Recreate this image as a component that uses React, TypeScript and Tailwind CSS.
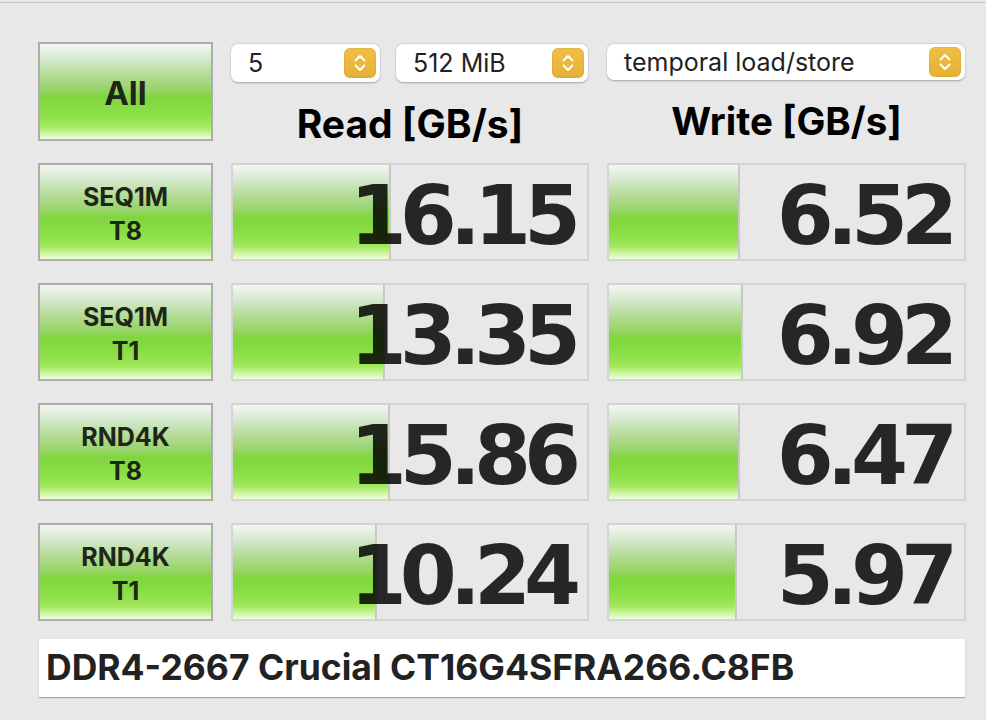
import React from "react";

const green =
  "bg-[linear-gradient(to_bottom,#f3f6f1_0%,#d6ead0_15%,#b0d98f_35%,#98d46a_48%,#80d63e_56%,#8ade46_72%,#a0e85a_86%,#d8f8b4_96%,#ecffd8_100%)]";

function Stepper() {
  return (
    <div className="w-[32px] h-[30px] rounded-[6px] bg-[linear-gradient(to_bottom,#efbf45,#e6b034)] flex items-center justify-center shadow-[inset_0_0_0_0.5px_rgba(0,0,0,0.08)]">
      <svg width="14" height="20" viewBox="0 0 14 20" fill="none">
        <path d="M2.5 7.5 L7 3 L11.5 7.5" stroke="white" strokeWidth="2" strokeLinecap="round" strokeLinejoin="round" />
        <path d="M2.5 12.5 L7 17 L11.5 12.5" stroke="white" strokeWidth="2" strokeLinecap="round" strokeLinejoin="round" />
      </svg>
    </div>
  );
}

function Select({ label, className }: { label: string; className: string }) {
  return (
    <div
      className={`h-[38px] bg-white rounded-[7px] shadow-[0_0.5px_2px_rgba(0,0,0,0.3)] flex items-center justify-between pl-[17px] pr-[4px] ${className}`}
    >
      <span className="text-[25px] text-[#222] font-['Inter',sans-serif] leading-none">{label}</span>
      <Stepper />
    </div>
  );
}

function LabelButton({ l1, l2 }: { l1: string; l2: string }) {
  return (
    <div
      className={`h-[98px] border-2 border-[#adadad] ${green} flex flex-col items-center justify-center pt-[3px]`}
    >
      <span className="text-[25px] font-bold leading-[34px] text-[#1d2618] font-['Inter',sans-serif]">{l1}</span>
      <span className="text-[25px] font-bold leading-[34px] text-[#1d2618] font-['Inter',sans-serif]">{l2}</span>
    </div>
  );
}

function ValueCell({ value, bar }: { value: string; bar: number }) {
  return (
    <div className="relative h-[98px] border-2 border-[#d3d3d3] bg-[#e8e8e8] flex justify-end items-start pt-[10px] pr-[13px]">
      <div
        className={`absolute left-0 top-0 bottom-0 ${green} border-r-2 border-[#c8c8c8]`}
        style={{ width: bar }}
      />
      <span className="relative text-[82px] leading-[82px] font-bold text-[rgba(0,0,0,0.84)] tracking-[-7px] font-['DejaVu_Sans',sans-serif]">
        {value}
      </span>
    </div>
  );
}

const rows = [
  { l1: "SEQ1M", l2: "T8", r: "16.15", rb: 158, w: "6.52", wb: 131 },
  { l1: "SEQ1M", l2: "T1", r: "13.35", rb: 152, w: "6.92", wb: 134 },
  { l1: "RND4K", l2: "T8", r: "15.86", rb: 157, w: "6.47", wb: 131 },
  { l1: "RND4K", l2: "T1", r: "10.24", rb: 144, w: "5.97", wb: 128 },
];

export default function App() {
  return (
    <div className="w-[986px] h-[720px] bg-[#e8e8e8] pt-[2px] overflow-hidden">
      <div className="h-px bg-[#c8c8c8]" />
      <div className="pl-[38px] pt-[39px]">
        <div className="grid grid-cols-[175px_358px_359px] gap-x-[18px] gap-y-[22px]">
          <div
            className={`h-[99px] border-2 border-[#adadad] ${green} flex items-center justify-center pt-[4px]`}
          >
            <span className="text-[33px] font-bold text-[#1d2618] font-['Inter',sans-serif] leading-none">All</span>
          </div>
          <div className="h-[99px] flex flex-col pt-[2px]">
            <div className="flex gap-[16px]">
              <Select label="5" className="w-[149px]" />
              <Select label="512 MiB" className="w-[192px] pl-[16px]" />
            </div>
            <div className="mt-[22px] text-center text-[39px] leading-[39px] font-bold text-black font-['Inter',sans-serif] whitespace-nowrap">
              Read [GB/s]
            </div>
          </div>
          <div className="h-[99px] flex flex-col pt-[2px]">
            <Select label="temporal load/store" className="w-[358px]" />
            <div className="mt-[22px] text-center text-[38.5px] leading-[39px] font-bold text-black font-['Inter',sans-serif] whitespace-nowrap">
              Write [GB/s]
            </div>
          </div>
          {rows.map((r, i) => (
            <React.Fragment key={i}>
              <LabelButton l1={r.l1} l2={r.l2} />
              <ValueCell value={r.r} bar={r.rb} />
              <ValueCell value={r.w} bar={r.wb} />
            </React.Fragment>
          ))}
        </div>
        <div className="mt-[18px] ml-px w-[926px] h-[58px] bg-white shadow-[0_1px_1px_rgba(0,0,0,0.28)] flex items-center pl-[7px]">
          <span className="text-[35.5px] font-bold text-[#222] font-['Inter',sans-serif] leading-none">
            DDR4-2667 Crucial CT16G4SFRA266.C8FB
          </span>
        </div>
      </div>
    </div>
  );
}
